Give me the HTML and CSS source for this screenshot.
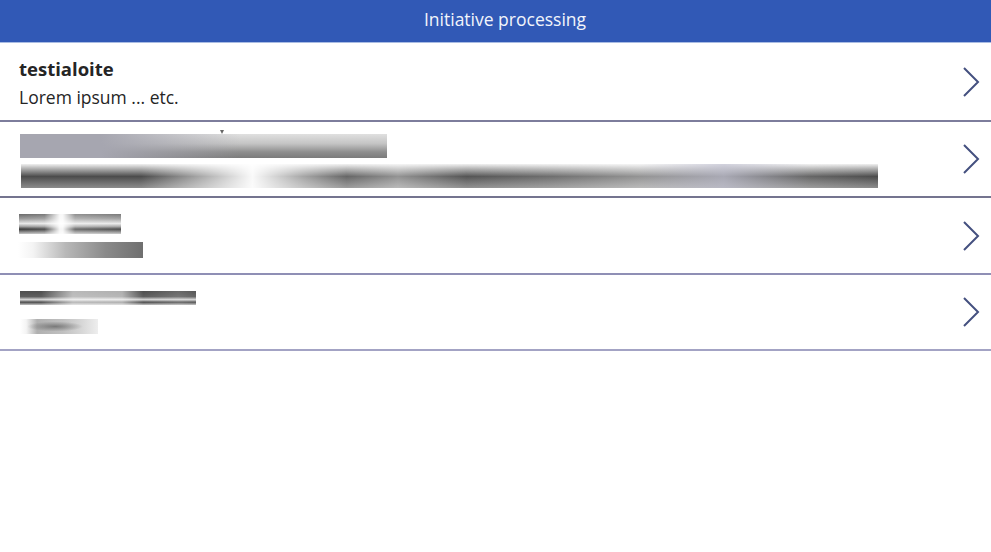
FILE: index.html
```html
<!DOCTYPE html>
<html lang="en">
<head>
  <meta charset="UTF-8">
  <title>Initiative processing</title>
  <link rel="stylesheet" href="styles.css">
</head>
<body>
<header class="title-bar">Initiative processing</header>
<main class="list">
  <!-- readable row -->
  <div class="row row-first">
    <div class="row-body">
      <div class="row-title">testialoite</div>
      <div class="row-text">Lorem ipsum ... etc.</div>
    </div>
    <svg class="chevron" width="18" height="30" viewBox="0 0 18 30"><path d="M2 1 L16 15 L2 29"/></svg>
  </div>
  <!-- redacted rows -->
  <div class="row row-second">
    <span class="tick"></span>
    <div class="row-body">
      <div class="blur blur-2a"></div>
      <div class="blur blur-2b"></div>
    </div>
    <svg class="chevron" width="18" height="30" viewBox="0 0 18 30"><path d="M2 1 L16 15 L2 29"/></svg>
  </div>
  <div class="row row-third">
    <div class="row-body">
      <div class="blur blur-3a"></div>
      <div class="blur blur-3b"></div>
    </div>
    <svg class="chevron" width="18" height="30" viewBox="0 0 18 30"><path d="M2 1 L16 15 L2 29"/></svg>
  </div>
  <div class="row row-fourth">
    <div class="row-body">
      <div class="blur blur-4a"></div>
      <div class="blur blur-4b"></div>
    </div>
    <svg class="chevron" width="18" height="30" viewBox="0 0 18 30"><path d="M2 1 L16 15 L2 29"/></svg>
  </div>
</main>
</body>
</html>
```

FILE: styles.css
```css
html, body {
  margin: 0;
  padding: 0;
  background: #fff;
}
body {
  font-family: "Open Sans", "Noto Sans", sans-serif;
  color: #252525;
  overflow: hidden;
}
.title-bar {
  height: 43px;
  line-height: 38px;
  padding-left: 19px;
  background: #3159b6;
  border-bottom: 1px solid #a9bce3;
  box-sizing: border-box;
  color: #f2f5fb;
  font-size: 17.5px;
  text-align: center;
}
.list {
  display: flex;
  flex-direction: column;
}
.row {
  position: relative;
  display: flex;
  align-items: center;
  box-sizing: border-box;
  height: 76.5px;
  padding-right: 11px;
  border-bottom: 2px solid #7d7d9c;
}
.row-first {
  height: 78.5px;
}
.row-second {
  border-bottom-color: #74748f;
}
.row-third {
  border-bottom-color: #8f8fb5;
}
.row-fourth {
  border-bottom-color: #a3a3c4;
}
.row-body {
  flex: 1;
  align-self: stretch;
  display: flex;
  flex-direction: column;
  align-items: flex-start;
}
.row-title {
  margin: 14px 0 0 19px;
  font-size: 18.5px;
  line-height: 24px;
  font-weight: 700;
}
.row-text {
  margin: 4px 0 0 19px;
  font-size: 17.5px;
  line-height: 24px;
}
.tick {
  position: absolute;
  left: 220px;
  top: 8px;
  border-left: 2px solid transparent;
  border-right: 2px solid transparent;
  border-top: 4px solid #666;
}
.chevron {
  flex: none;
  margin-top: 1px;
}
.chevron path {
  fill: none;
  stroke: #44507f;
  stroke-width: 2;
}
.blur-2a {
  width: 367px;
  height: 24px;
  margin: 12.5px 0 0 20px;
  background:
    linear-gradient(to right, rgba(166,166,176,1) 0, rgba(166,166,176,1) 22%, rgba(166,166,176,0) 60%),
    linear-gradient(to bottom, #e0e0e0 0, #c4c4c4 40%, #8e8e8e 75%, #7b7b7b 100%);
}
.blur-2b {
  width: 857px;
  height: 24px;
  margin: 6px 0 0 21px;
  background:
    linear-gradient(to right,
      rgba(255,255,255,0) 0, rgba(255,255,255,0) 14%, rgba(255,255,255,.45) 20%, rgba(255,255,255,.97) 27%,
      rgba(255,255,255,.5) 33%, rgba(255,255,255,.15) 38%, rgba(255,255,255,.4) 44%, rgba(255,255,255,.05) 52%,
      rgba(255,255,255,.2) 62%, rgba(255,255,255,.4) 72%, rgba(200,200,215,.75) 82%, rgba(255,255,255,.15) 92%, rgba(255,255,255,0) 100%),
    linear-gradient(to bottom, #f0f0f0 0, #a8a8a8 22%, #4c4c4c 52%, #6c6c6c 75%, #8c8c8c 100%);
}
.blur-3a {
  width: 102px;
  height: 20px;
  margin: 16px 0 0 19px;
  background:
    linear-gradient(to right, rgba(255,255,255,0) 0, rgba(255,255,255,.1) 25%, rgba(255,255,255,.95) 40%, rgba(255,255,255,.95) 43%, rgba(255,255,255,.25) 55%, rgba(255,255,255,.1) 100%),
    linear-gradient(to bottom, #6a6a6a 0, #9c9c9c 24%, #e8e8e8 48%, #a4a4a4 62%, #3a3a3a 76%, #c8c8c8 100%);
}
.blur-3b {
  width: 125px;
  height: 16px;
  margin: 8px 0 0 18px;
  background:
    linear-gradient(to right, #fff 0, #f4f4f4 12%, #b8b8b8 38%, #8a8a8a 70%, #6f6f6f 100%);
}
.blur-4a {
  width: 176px;
  height: 14px;
  margin: 16.5px 0 0 20px;
  background:
    linear-gradient(to right, rgba(255,255,255,0) 0, rgba(255,255,255,0) 12%, rgba(255,255,255,.6) 30%, rgba(255,255,255,.55) 58%, rgba(255,255,255,0) 70%, rgba(255,255,255,.15) 90%, rgba(255,255,255,.05) 100%),
    linear-gradient(to bottom, #4e4e4e 0, #5e5e5e 40%, #d8d8d8 62%, #4c4c4c 80%, #c4c4c4 100%);
}
.blur-4b {
  width: 78px;
  height: 15px;
  margin: 14px 0 0 20px;
  background:
    radial-gradient(ellipse 28px 5px at 45% 50%, rgba(110,110,110,.85) 0, rgba(110,110,110,0) 100%),
    linear-gradient(to right, #fff 0, #f4f4f4 8%, #b0b0b0 22%, #c0c0c0 55%, #d8d8d8 80%, #eee 100%);
}
```
